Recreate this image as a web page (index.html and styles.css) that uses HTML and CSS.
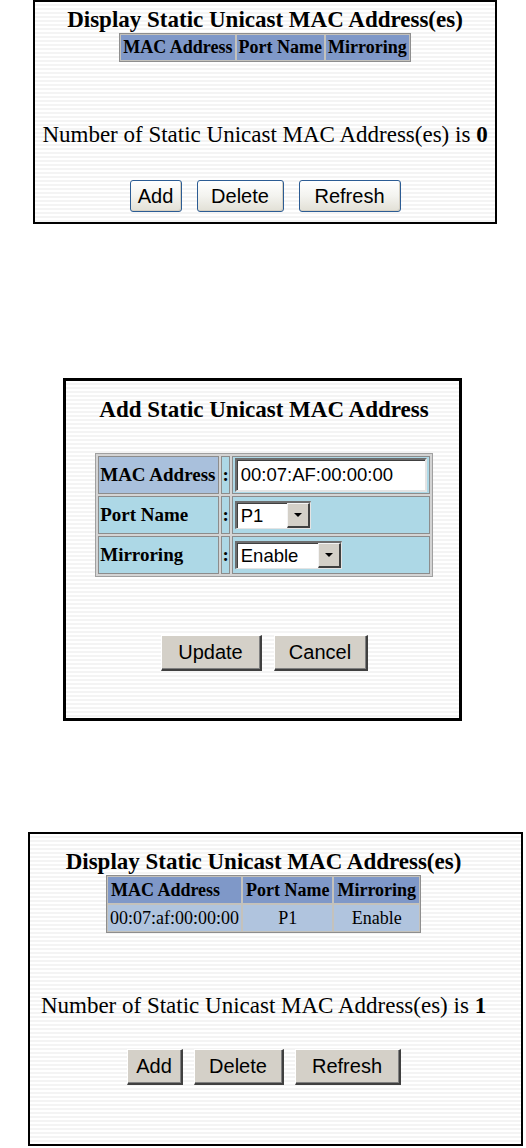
FILE: index.html
```html
<!DOCTYPE html>
<html lang="en">
<head>
<meta charset="utf-8">
<title>Static Unicast MAC Address</title>
<link rel="stylesheet" href="styles.css">
</head>
<body>
<div class="page">
  <section class="panel panel-list-empty">
    <h2 class="title">Display Static Unicast MAC Address(es)</h2>
    <table class="grid grid-empty">
      <tr><th>MAC Address</th><th>Port Name</th><th>Mirroring</th></tr>
    </table>
    <p class="count">Number of Static Unicast MAC Address(es) is <b>0</b></p>
    <div class="actions actions-xp">
      <button class="btn-xp btn-add">Add</button>
      <button class="btn-xp btn-delete">Delete</button>
      <button class="btn-xp btn-refresh">Refresh</button>
    </div>
  </section>

  <section class="panel panel-form">
    <h2 class="title">Add Static Unicast MAC Address</h2>
    <table class="form">
      <tr>
        <th class="label label-key">MAC Address</th>
        <td class="colon">:</td>
        <td class="value"><span class="input">00:07:AF:00:00:00</span></td>
      </tr>
      <tr>
        <th class="label">Port Name</th>
        <td class="colon">:</td>
        <td class="value"><span class="select select-port"><span class="select-text">P1</span><span class="select-arrow"></span></span></td>
      </tr>
      <tr>
        <th class="label">Mirroring</th>
        <td class="colon">:</td>
        <td class="value"><span class="select select-mirror"><span class="select-text">Enable</span><span class="select-arrow"></span></span></td>
      </tr>
    </table>
    <div class="actions actions-form">
      <button class="btn-classic btn-update">Update</button>
      <button class="btn-classic btn-cancel">Cancel</button>
    </div>
  </section>

  <section class="panel panel-list">
    <h2 class="title">Display Static Unicast MAC Address(es)</h2>
    <table class="grid grid-data">
      <tr><th>MAC Address</th><th>Port Name</th><th>Mirroring</th></tr>
      <tr><td class="mac">00:07:af:00:00:00</td><td>P1</td><td>Enable</td></tr>
    </table>
    <p class="count">Number of Static Unicast MAC Address(es) is <b>1</b></p>
    <div class="actions actions-classic">
      <button class="btn-classic btn-add2">Add</button>
      <button class="btn-classic btn-delete2">Delete</button>
      <button class="btn-classic btn-refresh2">Refresh</button>
    </div>
  </section>
</div>
</body>
</html>
```

FILE: styles.css
```css
* { box-sizing: border-box; }

html, body {
  margin: 0;
  padding: 0;
  background: #fff;
}

body {
  font-family: "Liberation Serif", "Times New Roman", serif;
  color: #000;
}

.page {
  display: flex;
  flex-direction: column;
  align-items: flex-start;
}

.panel {
  display: flex;
  flex-direction: column;
  align-items: center;
  border: 2px solid #000;
  background: repeating-linear-gradient(to bottom, #ffffff 0 2px, #f4f4f4 2px 4px);
}

.title {
  margin: 0;
  font-size: 23px;
  line-height: 26px;
  font-weight: bold;
  white-space: nowrap;
}

/* ---------- panel 1 ---------- */
.panel-list-empty {
  margin-left: 33px;
  width: 464px;
  padding: 5px 0 10px;
}

.count {
  margin: 60px 0 0;
  font-size: 23px;
  line-height: 26px;
  white-space: nowrap;
}

.actions {
  display: flex;
  justify-content: center;
}

.actions-xp {
  margin-top: 32px;
  gap: 15px;
}

.btn-xp {
  height: 32px;
  padding: 0;
  font-family: "Liberation Sans", Arial, sans-serif;
  font-size: 20px;
  color: #000;
  border: 1px solid #2c5c94;
  border-radius: 3px;
  background: linear-gradient(to bottom, #ffffff 0%, #f3f3ef 50%, #e2e0d6 100%);
  box-shadow: inset -1px -1px 0 #d6d0c2;
}

.btn-add { width: 52px; }
.btn-delete { width: 87px; }
.btn-refresh { width: 102px; }

/* ---------- grids ---------- */
.grid {
  border: 1px solid #8e8e8e;
  border-spacing: 0;
  background: #c8c8c8;
  font-size: 18px;
  line-height: 21px;
}

.grid th,
.grid td {
  border: 1px solid #c4c2bc;
  padding: 2px 2px;
  white-space: nowrap;
}

.grid th {
  background: #7f98c8;
  font-weight: bold;
  text-align: left;
}

.grid td {
  background: #b0c4de;
  text-align: center;
  font-weight: normal;
}

.grid-data {
  line-height: 22px;
}

.grid-data th {
  padding: 2px 3px;
}

.grid td.mac {
  padding: 2px 2px;
}

/* ---------- panel 2 ---------- */
.panel-form {
  margin-top: 154px;
  margin-left: 63px;
  width: 399px;
  border-width: 3px;
  padding: 16px 0 47px 3px;
}

.form {
  margin-top: 30px;
  border: 1px solid #a0a0a0;
  border-spacing: 2px;
  background: #d4d4d4;
  font-size: 19px;
  width: 336px;
}

.form th,
.form td {
  height: 38px;
  padding: 0;
  border: 1px solid #8c8c8c;
  background: #add8e6;
  white-space: nowrap;
}

.form .label {
  text-align: left;
  font-weight: bold;
  padding: 0 3px 0 1px;
  width: 124px;
}

.form .label-key {
  background: #a9c0dc;
}

.form .colon {
  font-weight: bold;
  text-align: center;
  width: 12px;
}

.form .value {
  padding: 0 2px;
}

.input {
  display: flex;
  align-items: center;
  width: 192px;
  height: 34px;
  padding: 0 4px;
  background: #fff;
  font-family: "Liberation Sans", Arial, sans-serif;
  font-size: 18.5px;
  border-top: 2px solid #6d6d6d;
  border-left: 2px solid #6d6d6d;
  border-right: 2px solid #e4e4e4;
  border-bottom: 2px solid #e4e4e4;
  box-shadow: inset 1px 1px 0 #404040;
}

.select {
  display: inline-flex;
  align-items: stretch;
  height: 28px;
  background: #fff;
  font-family: "Liberation Sans", Arial, sans-serif;
  font-size: 18.5px;
  color: #000;
  border-top: 2px solid #6d6d6d;
  border-left: 2px solid #6d6d6d;
  border-right: 1px solid #e4e4e4;
  border-bottom: 1px solid #e4e4e4;
  box-shadow: inset 1px 1px 0 #404040;
  vertical-align: middle;
}

.select-port { width: 76px; }
.select-mirror { width: 107px; }

.select-text {
  flex: 1;
  display: flex;
  align-items: center;
  padding-left: 4px;
}

.select-arrow {
  position: relative;
  width: 23px;
  background: #d4d0c8;
  border-top: 1px solid #f4f4f4;
  border-left: 1px solid #f4f4f4;
  border-right: 2px solid #404040;
  border-bottom: 2px solid #404040;
}

.select-arrow::after {
  content: "";
  position: absolute;
  left: 50%;
  top: 50%;
  margin-left: -4px;
  margin-top: -2px;
  border-left: 4px solid transparent;
  border-right: 4px solid transparent;
  border-top: 4px solid #000;
}

.actions-form {
  margin-top: 58px;
  gap: 12px;
}

.btn-classic {
  height: 36px;
  padding: 0;
  font-family: "Liberation Sans", Arial, sans-serif;
  font-size: 20px;
  color: #000;
  background: #d4d0c8;
  border-top: 1px solid #ffffff;
  border-left: 1px solid #ffffff;
  border-right: 2px solid #404040;
  border-bottom: 2px solid #404040;
  box-shadow: inset -1px -1px 0 #808080;
  border-radius: 0;
}

.btn-update { width: 101px; }
.btn-cancel { width: 94px; }

/* ---------- panel 3 ---------- */
.panel-list {
  margin-top: 111px;
  margin-left: 28px;
  width: 495px;
  padding: 15px 24px 59px 0;
}

.actions-classic {
  margin-top: 30px;
  gap: 11px;
}

.btn-add2 { width: 56px; }
.btn-delete2 { width: 90px; }
.btn-refresh2 { width: 106px; }
```
